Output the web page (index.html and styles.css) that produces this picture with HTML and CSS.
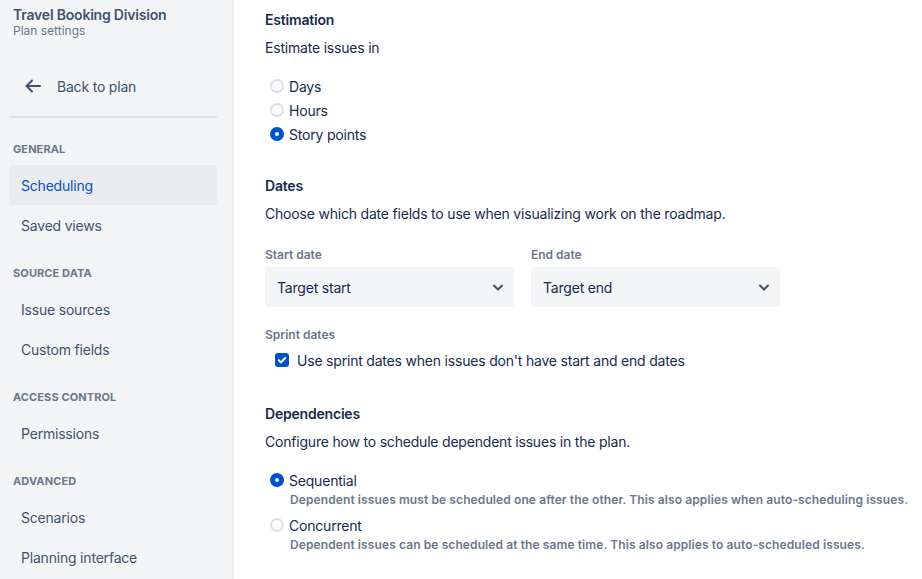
FILE: index.html
```html
<!DOCTYPE html>
<html lang="en">
<head>
<meta charset="utf-8">
<title>Plan settings</title>
<link rel="stylesheet" href="styles.css">
</head>
<body>
<aside class="sidebar">
  <div class="plan">
    <div class="plan-name">Travel Booking Division</div>
    <div class="plan-sub">Plan settings</div>
  </div>
  <div class="back">
    <svg class="back-icon" width="24" height="24" viewBox="0 0 24 24"><path d="M19 12H6M11 6.5L5.5 12l5.5 5.5" fill="none" stroke="#42526E" stroke-width="2" stroke-linecap="round" stroke-linejoin="round"/></svg>
    <span>Back to plan</span>
  </div>
  <div class="divider"></div>
  <div class="group">
    <div class="group-title">GENERAL</div>
    <div class="nav-item active">Scheduling</div>
    <div class="nav-item">Saved views</div>
  </div>
  <div class="group">
    <div class="group-title">SOURCE DATA</div>
    <div class="nav-item">Issue sources</div>
    <div class="nav-item">Custom fields</div>
  </div>
  <div class="group">
    <div class="group-title">ACCESS CONTROL</div>
    <div class="nav-item">Permissions</div>
  </div>
  <div class="group">
    <div class="group-title">ADVANCED</div>
    <div class="nav-item">Scenarios</div>
    <div class="nav-item">Planning interface</div>
  </div>
</aside>
<main class="main">
  <section class="section first">
    <h2 class="section-title">Estimation</h2>
    <p class="desc">Estimate issues in</p>
    <div class="radios">
      <div class="radio-row"><span class="radio"></span><span>Days</span></div>
      <div class="radio-row"><span class="radio"></span><span>Hours</span></div>
      <div class="radio-row"><span class="radio checked"></span><span>Story points</span></div>
    </div>
  </section>
  <section class="section">
    <h2 class="section-title">Dates</h2>
    <p class="desc">Choose which date fields to use when visualizing work on the roadmap.</p>
    <div class="fields">
      <div class="field">
        <div class="field-label">Start date</div>
        <div class="select"><span>Target start</span><svg width="24" height="24" viewBox="0 0 24 24"><path d="M8 10.5l4 4 4-4" fill="none" stroke="#42526E" stroke-width="2" stroke-linecap="round" stroke-linejoin="round"/></svg></div>
      </div>
      <div class="field">
        <div class="field-label">End date</div>
        <div class="select"><span>Target end</span><svg width="24" height="24" viewBox="0 0 24 24"><path d="M8 10.5l4 4 4-4" fill="none" stroke="#42526E" stroke-width="2" stroke-linecap="round" stroke-linejoin="round"/></svg></div>
      </div>
    </div>
    <div class="field-label sprint-label">Sprint dates</div>
    <div class="check-row">
      <span class="checkbox"><svg width="14" height="14" viewBox="0 0 14 14"><path d="M3.8 7.2l2.2 2.2 4.2-4.4" fill="none" stroke="#fff" stroke-width="2" stroke-linecap="round" stroke-linejoin="round"/></svg></span>
      <span>Use sprint dates when issues don't have start and end dates</span>
    </div>
  </section>
  <section class="section deps">
    <h2 class="section-title">Dependencies</h2>
    <p class="desc">Configure how to schedule dependent issues in the plan.</p>
    <div class="radios">
      <div class="radio-row"><span class="radio checked"></span><span>Sequential</span></div>
      <div class="help">Dependent issues must be scheduled one after the other. This also applies when auto-scheduling issues.</div>
      <div class="radio-row second"><span class="radio"></span><span>Concurrent</span></div>
      <div class="help">Dependent issues can be scheduled at the same time. This also applies to auto-scheduled issues.</div>
    </div>
  </section>
</main>
</body>
</html>
```

FILE: styles.css
```css
* { box-sizing: border-box; }
html, body { height: 100%; }
body {
  margin: 0;
  display: flex;
  font-family: Inter, "Noto Sans", "Liberation Sans", sans-serif;
  font-size: 14px;
  letter-spacing: -0.2px;
  color: #172B4D;
  background: #fff;
  overflow: hidden;
}
.sidebar {
  width: 234px;
  flex: none;
  background: #F4F5F7;
  border-right: 2px solid #EBECF0;
  padding: 7px 15px 0 9px;
  height: 579px;
}
.plan { padding-left: 4px; }
.plan-name { font-size: 14px; font-weight: 600; line-height: 16px; color: #42526E; }
.plan-sub { font-size: 12px; line-height: 16px; color: #6B778C; letter-spacing: 0; }
.back {
  margin-top: 27px;
  height: 40px;
  display: flex;
  align-items: center;
  gap: 12px;
  padding-left: 12px;
  color: #42526E;
}
.back-icon { display: block; }
.divider { margin-top: 10px; height: 2px; background: #DFE1E6; }
.group { margin-top: 20px; }
.divider + .group { margin-top: 23px; }
.group-title {
  padding-left: 4px;
  font-size: 11px;
  font-weight: 700;
  line-height: 16px;
  color: #6B778C;
  letter-spacing: 0.1px;
  margin-bottom: 8px;
}
.nav-item {
  height: 40px;
  display: flex;
  align-items: center;
  padding-left: 12px;
  border-radius: 3px;
  color: #42526E;
}
.nav-item.active { background: #EBECF0; color: #0052CC; }

.main { flex: 1; padding: 10px 31px 0; }
.section { margin-top: 30px; }
.section.first { margin-top: 0; }
.section.deps { margin-top: 32px; }
.section-title { margin: 0; font-size: 14px; font-weight: 600; line-height: 20px; color: #172B4D; }
.desc { margin: 8px 0 0; line-height: 20px; }
.radios { margin-top: 16px; }
.radio-row { height: 24px; display: flex; align-items: center; gap: 5px; padding-left: 5px; }
.radio-row.second { margin-top: 5px; }
.radio {
  width: 14px; height: 14px; border-radius: 50%;
  border: 2px solid #DFE1E6; background: #FAFBFC;
  flex: none;
}
.radio.checked { background: #fff; border: 5px solid #0052CC; }
.help { padding-left: 25px; font-size: 12px; line-height: 16px; font-weight: 600; color: #6B778C; letter-spacing: 0.1px; white-space: nowrap; }
.fields { display: flex; gap: 17px; margin-top: 23px; }
.field { width: 249px; }
.field-label { font-size: 12px; font-weight: 600; line-height: 16px; color: #6B778C; letter-spacing: 0; }
.select {
  margin-top: 4px; height: 40px; background: #F4F5F7; border-radius: 3px;
  display: flex; align-items: center; justify-content: space-between;
  padding: 0 4px 0 12px;
}
.select svg { display: block; }
.sprint-label { margin-top: 20px; }
.check-row { margin-top: 5px; height: 24px; display: flex; align-items: center; gap: 8px; padding-left: 10px; }
.checkbox { width: 14px; height: 14px; border-radius: 3px; background: #0052CC; flex: none; display: block; }
.checkbox svg { display: block; }
```
